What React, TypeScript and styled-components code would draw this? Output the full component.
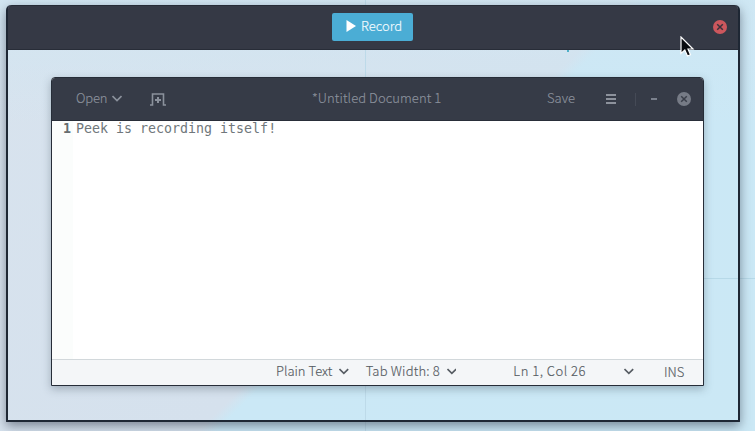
import React from "react";
import styled, { createGlobalStyle } from "styled-components";

const GlobalStyle = createGlobalStyle`
  * { box-sizing: border-box; }
  body { margin: 0; overflow: hidden; }
`;

const Desktop = styled.div`
  width: 755px;
  height: 431px;
  padding: 5px 15px 9px 6px;
  font-family: "Noto Sans CJK SC", "Noto Sans", sans-serif;
  font-size: 13px;
  font-weight: 300;
  line-height: 20px;
  -webkit-text-stroke: 0.15px currentColor;
  background:
    linear-gradient(#bddae9, #bddae9) 365px 0 / 1px 431px no-repeat,
    linear-gradient(#b7d9e8, #b7d9e8) 704px 278px / 51px 1px no-repeat,
    linear-gradient(#4fb0c8, #4fb0c8) 567px 50px / 2px 2px no-repeat,
    linear-gradient(180deg, rgba(208, 231, 243, 0.75), rgba(208, 231, 243, 0) 125px),
    linear-gradient(135deg, #d8e3ee 0, #d5e1ed 445px, #cbe8f6 458px, #cbe8f5 100%);
`;

const RecorderWindow = styled.section`
  position: relative;
  height: 417px;
  display: flex;
  flex-direction: column;
  border: 2px solid #1e2734;
  border-top-width: 0;
  border-radius: 5px 5px 1px 1px;
  box-shadow: 0 4px 11px rgba(42, 50, 68, 0.52);
`;

const RecorderBar = styled.header`
  height: 45px;
  flex: none;
  display: grid;
  grid-template-columns: 1fr 81px 1fr;
  align-items: start;
  padding: 7px 11px 0 10px;
  background: #353945;
  border-top: 1px solid #272c37;
  border-bottom: 1px solid #282d38;
  border-radius: 4px 4px 0 0;
`;

const RecordButton = styled.button`
  grid-column: 2;
  height: 28px;
  padding: 0 10px 2px 14px;
  display: flex;
  align-items: center;
  gap: 5px;
  border: 0;
  border-radius: 2px;
  background: #4badd5;
  color: #f2fbff;
  font: inherit;
  white-space: nowrap;
`;

const RecorderClose = styled.div`
  justify-self: end;
  height: 28px;
  display: flex;
  align-items: center;
`;

const CaptureArea = styled.main`
  flex: 1;
  padding: 27px 34px 34px 43px;
`;

const EditorWindow = styled.section`
  height: 309px;
  display: flex;
  flex-direction: column;
  border: 1px solid #262d38;
  border-radius: 4px 4px 0 0;
  background: #fff;
  box-shadow: 0 3px 8px rgba(50, 65, 80, 0.34);
`;

const EditorBar = styled.header`
  height: 43px;
  flex: none;
  display: grid;
  grid-template-columns: 260px 131px 1fr;
  align-items: center;
  padding: 0 12px 0 0;
  background: #363b47;
  border-bottom: 1px solid #292e39;
  border-radius: 3px 3px 0 0;
  color: #8b919c;
`;

const BarGroup = styled.div<{ $end?: boolean }>`
  display: flex;
  align-items: center;
  justify-content: ${(p) => (p.$end ? "flex-end" : "flex-start")};
  padding-left: ${(p) => (p.$end ? 0 : 24)}px;
`;

const MenuLabel = styled.span<{ $width: number; $spacing?: number; $low?: boolean }>`
  width: ${(p) => p.$width}px;
  flex: none;
  padding-bottom: ${(p) => (p.$low ? 0 : 2)}px;
  letter-spacing: ${(p) => p.$spacing ?? 0}px;
  white-space: nowrap;
`;

const Title = styled.h1`
  margin: 0;
  padding-bottom: 2px;
  font-size: 13px;
  font-weight: 300;
  letter-spacing: 0.08px;
  white-space: nowrap;
`;

const Gap = styled.span<{ $size: number }>`
  width: ${(p) => p.$size}px;
  flex: none;
`;

const Divider = styled.span`
  width: 1px;
  height: 13px;
  background: #454a56;
`;

const Dash = styled.span`
  width: 6px;
  height: 2px;
  background: #7b818d;
`;

const Document = styled.div`
  flex: 1;
  display: flex;
  font-family: "DejaVu Sans Mono", monospace;
  font-size: 13.3px;
  font-weight: 400;
  line-height: 16px;
  color: #70777b;
  -webkit-text-stroke: 0;
`;

const Gutter = styled.div`
  width: 21px;
  padding-right: 2px;
  text-align: right;
  font-weight: 700;
  color: #666d70;
  background: #fbfdfc;
`;

const TextLine = styled.div`
  padding-left: 3px;
  white-space: pre;
`;

const StatusBar = styled.footer`
  height: 26px;
  flex: none;
  display: flex;
  align-items: center;
  padding: 0 17px 1px 224px;
  background: #f4f6f8;
  border-top: 1px solid #d2d8db;
  color: #565c63;
`;

const Pointer = styled.svg`
  position: absolute;
  left: 672px;
  top: 31px;
`;

function Chevron({ color }: { color: string }) {
  return (
    <svg width="10" height="10" viewBox="0 0 10 10">
      <path d="M0.5 2 5 6.5 9.5 2" fill="none" stroke={color} strokeWidth="1.7" />
    </svg>
  );
}

function CloseIcon({ fill, mark }: { fill: string; mark: string }) {
  return (
    <svg width="14" height="14" viewBox="0 0 14 14">
      <circle cx="7" cy="7" r="7" fill={fill} />
      <path d="m4.2 4.2 5.6 5.6M9.8 4.2 4.2 9.8" stroke={mark} strokeWidth="1.5" />
    </svg>
  );
}

export default function App() {
  return (
    <>
      <GlobalStyle />
      <Desktop>
        <RecorderWindow>
          <RecorderBar>
            <RecordButton>
              <svg width="10" height="12" viewBox="0 0 10 12">
                <path d="M0.5 0 10 6 0.5 12Z" fill="#fff" />
              </svg>
              Record
            </RecordButton>
            <RecorderClose>
              <CloseIcon fill="#cc575d" mark="#39323c" />
            </RecorderClose>
          </RecorderBar>
          <CaptureArea>
            <EditorWindow>
              <EditorBar>
                <BarGroup>
                  <MenuLabel $width={36} $spacing={-0.2}>Open</MenuLabel>
                  <Chevron color="#8b919c" />
                  <Gap $size={28} />
                  <svg width="16" height="13" viewBox="0 0 16 13">
                    <path d="M0 12H2.5V1H13.5V12H16" fill="none" stroke="#8b919c" strokeWidth="1.6" />
                    <path d="M8 4V10M5 7H11" stroke="#8b919c" strokeWidth="2" />
                  </svg>
                </BarGroup>
                <Title>*Untitled Document 1</Title>
                <BarGroup $end>
                  <MenuLabel $width={27}>Save</MenuLabel>
                  <Gap $size={32} />
                  <svg width="10" height="10" viewBox="0 0 10 10">
                    <path d="M0 1H10M0 5H10M0 9H10" stroke="#8d929c" strokeWidth="2" />
                  </svg>
                  <Gap $size={19} />
                  <Divider />
                  <Gap $size={15} />
                  <Dash />
                  <Gap $size={20} />
                  <CloseIcon fill="#767b86" mark="#3a3f4a" />
                </BarGroup>
              </EditorBar>
              <Document>
                <Gutter>1</Gutter>
                <TextLine>Peek is recording itself!</TextLine>
              </Document>
              <StatusBar>
                <MenuLabel $width={63}>Plain Text</MenuLabel>
                <Chevron color="#565c63" />
                <Gap $size={17} />
                <MenuLabel $width={81} $spacing={0.2}>Tab Width: 8</MenuLabel>
                <Chevron color="#565c63" />
                <Gap $size={57} />
                <MenuLabel $width={111} $spacing={0.5}>Ln 1, Col 26</MenuLabel>
                <Chevron color="#565c63" />
                <Gap $size={30} />
                <MenuLabel $width={22} $low>INS</MenuLabel>
              </StatusBar>
            </EditorWindow>
          </CaptureArea>
          <Pointer width="15" height="22" viewBox="0 0 15 22">
            <path
              d="M1 1V17.5L4.8 14 7.5 20 10.5 18.7 8 13H13Z"
              fill="#090b0f"
              stroke="#fff"
              strokeWidth="1.2"
            />
          </Pointer>
        </RecorderWindow>
      </Desktop>
    </>
  );
}
